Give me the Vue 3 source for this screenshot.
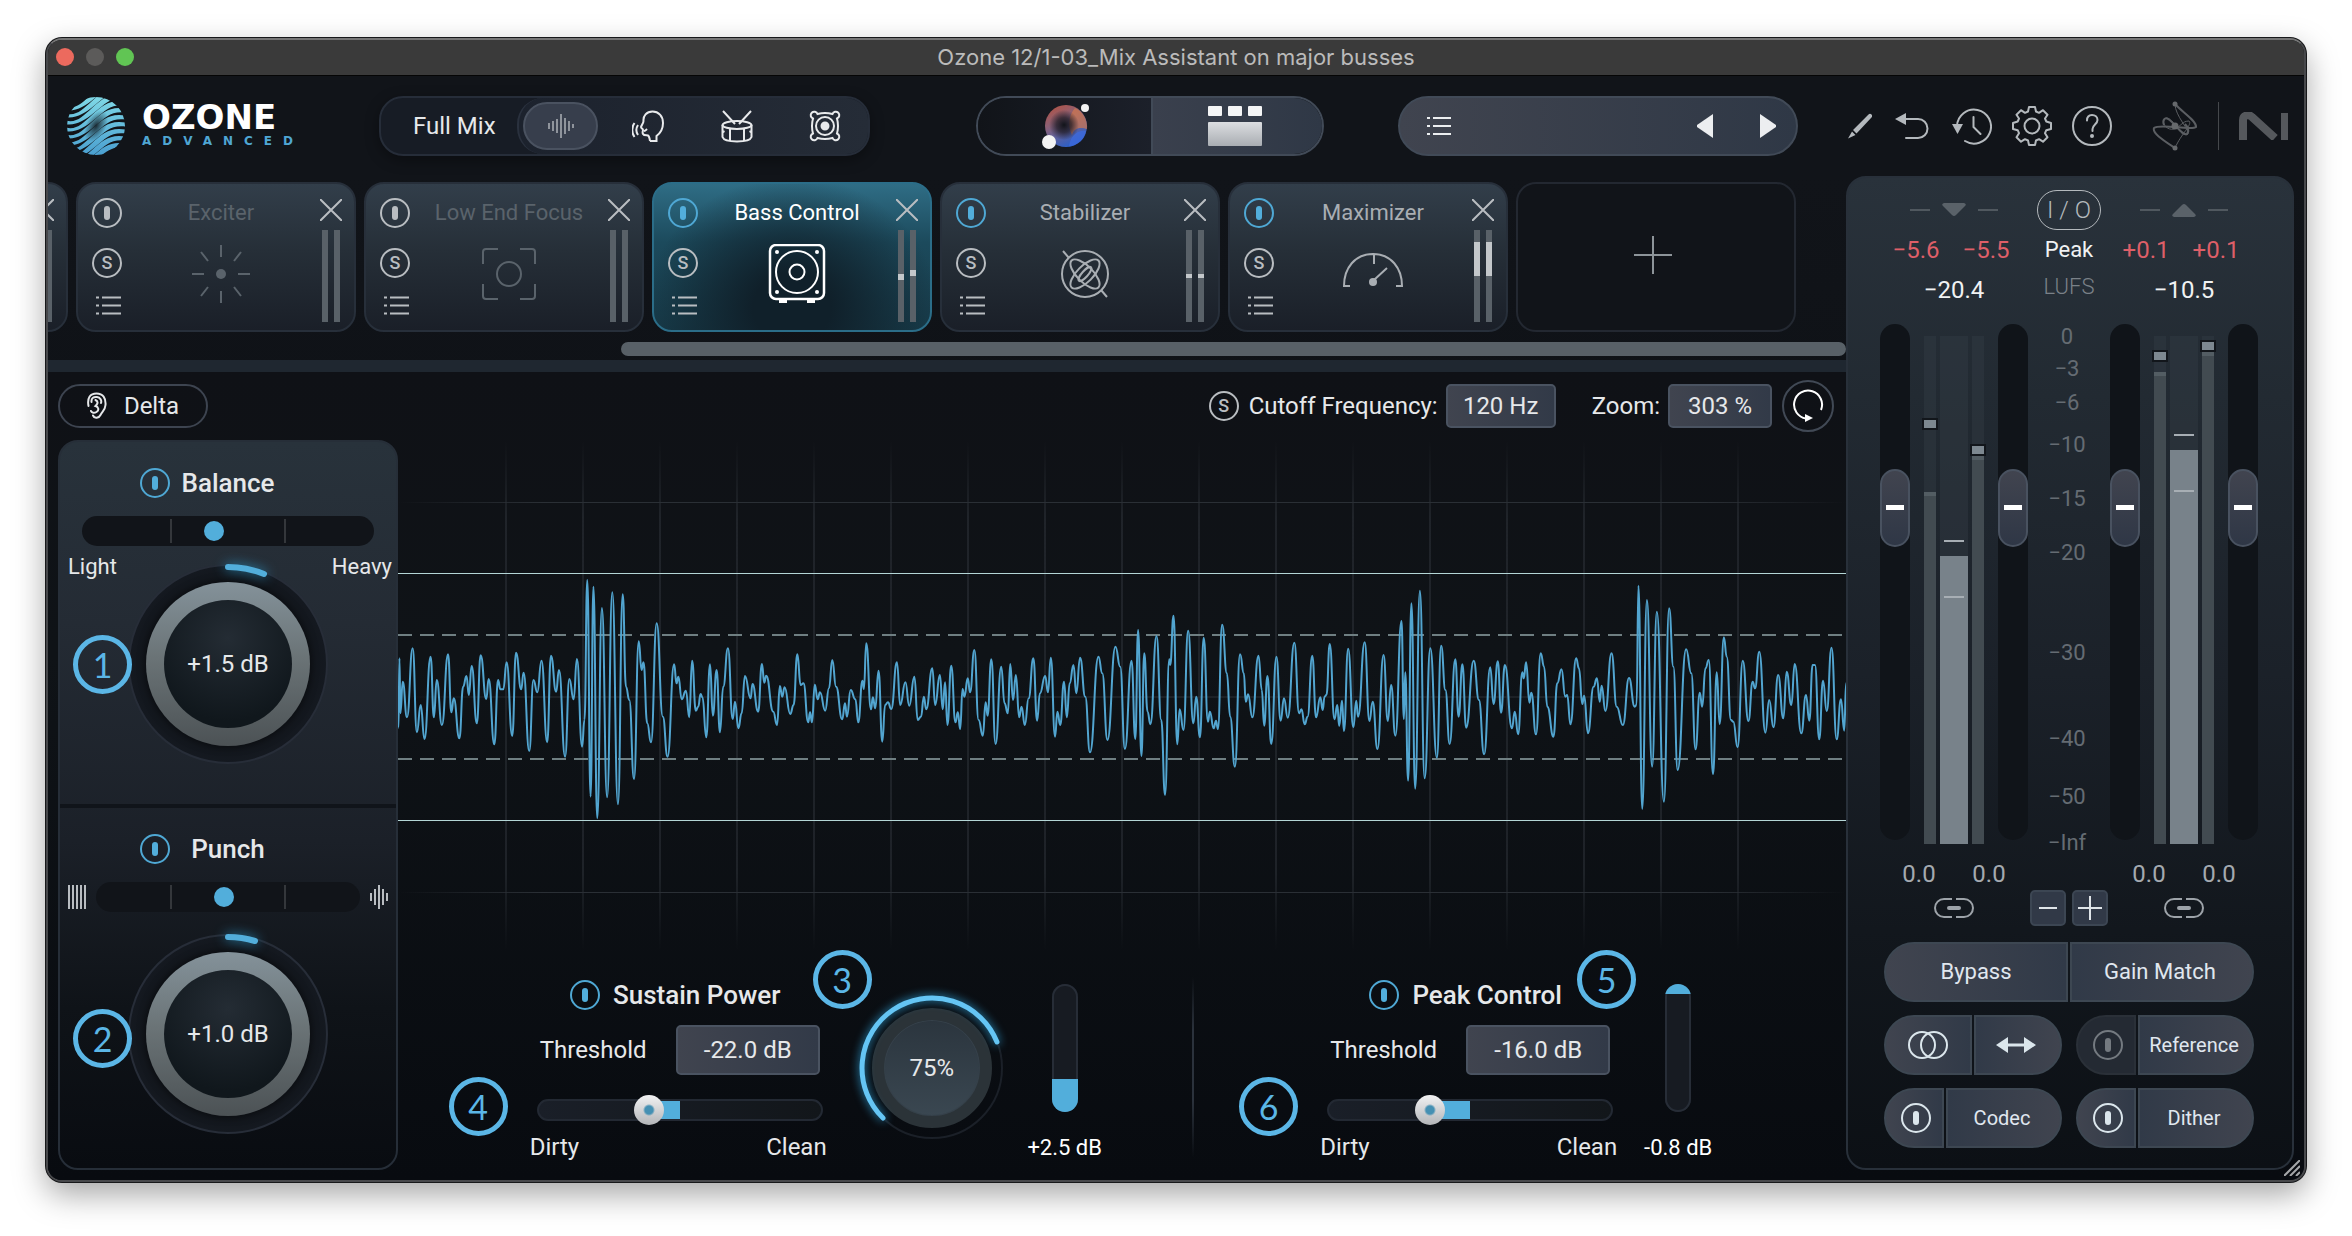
<script setup>
import { ref } from 'vue'

const modules = [
  { id: 'edge', name: '', state: 'off', meter: [] },
  { id: 'exciter', name: 'Exciter', state: 'off', meter: [] },
  { id: 'lowend', name: 'Low End Focus', state: 'off', meter: [] },
  { id: 'bass', name: 'Bass Control', state: 'active', meter: [[44, 6], [40, 6]] },
  { id: 'stabilizer', name: 'Stabilizer', state: 'on', meter: [[44, 4], [44, 4]] },
  { id: 'maximizer', name: 'Maximizer', state: 'on', meter: [[12, 34], [12, 34]] }
]

const macros = [
  { id: 'balance', name: 'Balance', value: '+1.5 dB', badge: 1, dot: 132, arc: 'M100 3A97 97 0 0 1 136 10' },
  { id: 'punch', name: 'Punch', value: '+1.0 dB', badge: 2, dot: 128, arc: 'M100 3A97 97 0 0 1 127 7' }
]

const groups = ref([
  { id: 'sustain', name: 'Sustain Power', badges: [3, 4], threshold: '-22.0 dB', slider: 38, knob: '75%', from: 74, fill: 27, readout: '+2.5 dB' },
  { id: 'peak', name: 'Peak Control', badges: [5, 6], threshold: '-16.0 dB', slider: 34, knob: '', from: 0, fill: 8, readout: '-0.8 dB' }
])

const cutoff = ref('120 Hz')
const zoom = ref('303 %')

const ticks = [
  ['0', 13], ['−3', 45], ['−6', 79], ['−10', 121], ['−15', 175],
  ['−20', 229], ['−30', 329], ['−40', 415], ['−50', 473], ['−Inf', 519]
]

const io = [
  { id: 'in', peaks: ['−5.6', '−5.5'], lufs: '−20.4', l: 156, lp: 82, r: 120, rp: 108, mid: 220, marks: [204, 260] },
  { id: 'out', peaks: ['+0.1', '+0.1'], lufs: '−10.5', l: 36, lp: 14, r: 16, rp: 4, mid: 114, marks: [98, 154] }
]
const faders = ref({ inL: 67, inR: 67, outL: 67, outR: 67 })

const gridLines = Array.from({ length: 17 }, (_, i) => 108 + i * 77)

// Turning points of the waveform, in the scope's own sample units.
const head = [[18, 565], [20, 355], [22, 520], [27, 425], [36, 532], [48, 325], [57, 577], [65, 495], [73, 597], [86, 350], [93, 532], [99, 420], [110, 555], [123, 343], [130, 517], [135, 475], [147, 595], [155, 440], [162, 408], [167, 465], [173, 378], [184, 550], [192, 346], [204, 477], [209, 417], [221, 613], [229, 420], [234, 448], [240, 448], [247, 367], [259, 588], [267, 338], [278, 448], [283, 398], [295, 633], [304, 420], [312, 457], [321, 362], [333, 607], [341, 347], [352, 455], [358, 390], [371, 650], [380, 417], [389, 478], [396, 357], [407, 620], [412, 540], [418, 120], [425, 770], [431, 140], [439, 835], [449, 204], [460, 772], [471, 157], [483, 793], [493, 163], [500, 440], [507, 480], [517, 717], [527, 304], [533, 390], [537, 367], [545, 550], [553, 607], [565, 250], [578, 530], [588, 650], [602, 373], [607, 430], [611, 410], [618, 478], [627, 452], [634, 532], [640, 362], [648, 512], [653, 500], [658, 462], [662, 472], [670, 592], [678, 373], [684, 527], [692, 390], [699, 577], [706, 440], [716, 325], [726, 537], [731, 485], [738, 565], [745, 520], [752, 408], [764, 475], [768, 432], [780, 515], [788, 372], [793, 428], [797, 407], [812, 515], [820, 555], [826, 438], [831, 470], [836, 442], [848, 522], [855, 495], [863, 343], [870, 435], [876, 430], [886, 547], [890, 517], [894, 547], [900, 434], [906, 478], [911, 457], [922, 512], [930, 445], [937, 360], [945, 440], [958, 538], [964, 490], [968, 530], [976, 450], [986, 478], [992, 547], [1001, 422], [1004, 447], [1009, 310], [1019, 508], [1023, 472], [1028, 505], [1035, 392], [1043, 605], [1049, 495], [1055, 487], [1062, 507], [1074, 367], [1081, 495], [1092, 427], [1100, 497], [1111, 410], [1118, 540], [1125, 530], [1131, 470], [1136, 508], [1149, 385], [1155, 495], [1165, 405], [1171, 508], [1176, 427], [1181, 555], [1189, 377], [1198, 547], [1203, 517], [1208, 567], [1213, 447], [1217, 470], [1224, 415], [1229, 457], [1238, 330], [1247, 540], [1256, 587], [1262, 487], [1266, 527], [1274, 358], [1283, 612], [1295, 380], [1302, 490], [1309, 520], [1314, 372], [1320, 480], [1326, 405], [1333, 532], [1338, 500], [1345, 555], [1353, 475], [1363, 355], [1371, 542], [1377, 460], [1388, 408], [1394, 457], [1400, 353], [1409, 590], [1414, 515], [1420, 555], [1428, 425], [1434, 532], [1440, 430], [1448, 375], [1454, 460], [1462, 353], [1473, 470], [1483, 637], [1501, 350], [1509, 400], [1520, 600], [1537, 320], [1547, 380]]
const tail = [[10, 627], [24, 362], [32, 597], [38, 270], [45, 648], [51, 340], [58, 515], [64, 553], [77, 288], [87, 540], [95, 765], [104, 358], [106, 375], [113, 227], [121, 613], [126, 508], [134, 570], [144, 272], [155, 550], [161, 470], [169, 592], [177, 293], [186, 545], [190, 515], [198, 565], [203, 542], [207, 567], [216, 254], [226, 400], [233, 530], [243, 680], [254, 343], [262, 400], [266, 485], [271, 463], [280, 532], [293, 347], [300, 450], [305, 557], [312, 408], [320, 612], [331, 350], [340, 542], [347, 475], [355, 533], [369, 308], [379, 520], [384, 508], [391, 553], [397, 530], [407, 347], [415, 532], [424, 472], [429, 510], [433, 470], [437, 465], [444, 312], [454, 538], [460, 495], [464, 558], [470, 482], [474, 573], [483, 326], [494, 562], [500, 482], [504, 530], [518, 307], [528, 543], [535, 485], [545, 627], [558, 345], [567, 543], [574, 435], [583, 587], [596, 243], [601, 537], [604, 397], [610, 722], [617, 190], [625, 746], [635, 152], [645, 715], [657, 325], [671, 653], [680, 317], [689, 450], [698, 612], [710, 358], [717, 530], [725, 373], [733, 563], [749, 362], [760, 480], [771, 643], [784, 382], [791, 492], [800, 364], [807, 518], [815, 375], [830, 565], [836, 515], [843, 583], [852, 397], [855, 415], [860, 367], [867, 488], [871, 458], [881, 583], [891, 340], [898, 380], [905, 500], [918, 590], [926, 430], [935, 388], [943, 470], [947, 465], [954, 553], [966, 355], [972, 385], [979, 492], [983, 467], [991, 580], [1003, 440], [1010, 415], [1016, 485], [1020, 437], [1028, 513], [1041, 340], [1052, 500], [1065, 555], [1078, 414], [1090, 500], [1094, 495], [1098, 137], [1106, 807], [1116, 180], [1127, 680], [1137, 215], [1152, 785], [1163, 205], [1172, 380], [1181, 690], [1199, 328], [1210, 400], [1219, 628], [1228, 458], [1233, 500], [1240, 385], [1247, 360], [1256, 703], [1264, 397], [1270, 552], [1279, 292], [1285, 350], [1294, 540], [1299, 545], [1308, 622], [1319, 362], [1331, 543], [1340, 425], [1345, 445], [1354, 335], [1367, 578], [1375, 480], [1384, 562], [1394, 405], [1405, 535], [1412, 395], [1422, 495], [1429, 372], [1443, 580], [1453, 465], [1460, 542], [1467, 375], [1472, 375], [1481, 598], [1489, 422], [1497, 513], [1507, 323], [1518, 598], [1527, 478], [1534, 572], [1538, 430]]
const samples = [...head, ...tail.map(([x, y]) => [x + 1547, y])]
const wave = samples.reduce((d, [x, y], i) => {
  if (!i) return `M${x} ${y}`
  const [px, py] = samples[i - 1]
  const mx = (px + x) / 2
  return `${d}C${mx} ${py} ${mx} ${y} ${x} ${y}`
}, '')

const logoLines = Array.from({ length: 11 }, (_, i) => 2 + i * 7)
</script>

<template>
  <div class="window">
    <header class="titlebar">
      <div class="lights">
        <button class="light red" aria-label="Close"></button>
        <button class="light grey" aria-label="Minimize"></button>
        <button class="light green" aria-label="Zoom window"></button>
      </div>
      <h1>Ozone 12/1-03_Mix Assistant on major busses</h1>
    </header>

    <nav class="topbar">
      <div class="brand">
        <svg width="60" height="58" viewBox="0 0 60 58" aria-hidden="true">
          <defs>
            <linearGradient id="globe" x1="0" y1="0" x2="0" y2="1">
              <stop offset="0" stop-color="#7fd8e6" />
              <stop offset="1" stop-color="#4a9fd0" />
            </linearGradient>
            <radialGradient id="swirl">
              <stop offset="0" stop-color="#101419" stop-opacity=".85" />
              <stop offset="1" stop-color="#101419" stop-opacity="0" />
            </radialGradient>
            <mask id="stripes" maskUnits="userSpaceOnUse" x="0" y="0" width="60" height="58">
              <g fill="#fff">
                <path v-for="y in logoLines" :key="y" :d="`M-2 ${y}c12 4 18-3 28-12s18-17 36-13v4c-16-3-22 4-33 13s-19 14-31 12z`" />
              </g>
            </mask>
          </defs>
          <circle cx="30" cy="29" r="29" fill="url(#globe)" mask="url(#stripes)" />
          <ellipse cx="30" cy="29" rx="10" ry="17" transform="rotate(30 30 29)" fill="url(#swirl)" />
        </svg>
        <div class="wordmark">
          <strong>OZONE</strong>
          <span>ADVANCED</span>
        </div>
      </div>

      <div class="focus">
        <span>Full Mix</span>
        <div class="modes">
          <button class="selected" aria-label="Full mix">
            <svg width="28" height="24" viewBox="0 0 28 24"><path d="M2 9v6M6 7v10M10 5v14M14 0v24M18 4v16M22 7v10M26 10v4" /></svg>
          </button>
          <button aria-label="Vocals">
            <svg width="34" height="32" viewBox="0 0 34 32"><path d="M18 31h6.500v-5c4-3 6.500-7 6.500-13C31 6 26.500 1.500 20.500 1.500S11 6 11.500 11c0 2-2 4-2.500 6 0 1.500 2 1.500 2 3s-1 2 0 4 4 1 5 1.500 1.500 2 2 5.500M6 15c-2 3-2 7 0 10M2.500 13c-3 4-3 10 0 14M15 19c-1 1-1.500 2-3 2" /></svg>
          </button>
          <button aria-label="Drums">
            <svg width="34" height="34" viewBox="0 0 34 34"><ellipse cx="17" cy="16" rx="14.500" ry="4" /><path d="M2.500 16v12c2 6 27 6 29 0V16M10 20v12M24 20v12M2.500 22l2 1M31.500 22l-2 1M15 15 3 2M19 15 31 2" /></svg>
          </button>
          <button aria-label="Bass">
            <svg width="32" height="32" viewBox="0 0 32 32"><path d="M8.500 4Q16 2 23.500 4A3.500 3.500 0 1 1 28 8.500Q30 16 28 23.500A3.500 3.500 0 1 1 23.500 28Q16 30 8.500 28A3.500 3.500 0 1 1 4 23.500Q2 16 4 8.500A3.500 3.500 0 1 1 8.500 4z" /><circle cx="16" cy="16" r="9" /><circle cx="16" cy="16" r="3.500" fill="#e8eaec" /></svg>
          </button>
        </div>
      </div>

      <div class="view">
        <button class="assistant" aria-label="Assistant view">
          <svg width="48" height="48" viewBox="0 0 48 48">
            <defs>
              <linearGradient id="orb" x1="0" y1="0" x2=".5" y2="1">
                <stop offset="0" stop-color="#b9503a" /><stop offset=".45" stop-color="#8a6178" /><stop offset="1" stop-color="#2f5fc4" />
              </linearGradient>
              <radialGradient id="core"><stop offset="0" stop-color="#12141a" /><stop offset=".5" stop-color="#1a1820" stop-opacity=".7" /><stop offset="1" stop-color="#1a1820" stop-opacity="0" /></radialGradient>
            </defs>
            <circle cx="25" cy="24" r="21" fill="url(#orb)" />
            <path d="M34 6a21 21 0 0 1 12 21c-5-2-13-2-15 6-5-10-3-20 3-27z" fill="#d87a4a" opacity=".65" />
            <path d="M45 29c-6-1-15 2-17 15 9 0 16-7 17-15z" fill="#3d6be0" opacity=".7" />
            <circle cx="23" cy="23" r="15" fill="url(#core)" />
            <circle cx="8" cy="40" r="7" fill="#f3f3f3" /><circle cx="44" cy="6" r="4" fill="#f3f3f3" />
          </svg>
        </button>
        <button class="detail" aria-label="Module view">
          <svg width="54" height="40" viewBox="0 0 54 40">
            <defs><linearGradient id="mod" x1="0" y1="0" x2="0" y2="1"><stop offset="0" stop-color="#dcdee1" /><stop offset="1" stop-color="#a9adb2" /></linearGradient></defs>
            <rect width="14" height="10" rx="1" fill="#f4f5f6" /><rect x="20" width="14" height="10" rx="1" fill="#f4f5f6" /><rect x="40" width="14" height="10" rx="1" fill="#f4f5f6" /><rect y="16" width="54" height="24" rx="1" fill="url(#mod)" />
          </svg>
        </button>
      </div>

      <div class="preset">
        <button aria-label="Presets"><svg width="24" height="20" viewBox="0 0 24 20"><path d="M0 2h3M6 2h18M0 10h3M6 10h18M0 18h3M6 18h18" stroke="#eceef0" stroke-width="2" /></svg></button>
        <div class="steps">
          <button aria-label="Previous preset"><svg width="17" height="24" viewBox="0 0 17 24"><path d="M16 0v24L0 13v-2z" fill="#eceef0" /></svg></button>
          <button aria-label="Next preset"><svg width="17" height="24" viewBox="0 0 17 24"><path d="M1 0v24l16-11v-2z" fill="#eceef0" /></svg></button>
        </div>
      </div>

      <div class="tools">
        <button aria-label="Edit"><svg width="24" height="26" viewBox="0 0 24 26"><path d="m5 17 15.500-15.500a2 2 0 0 1 3 3L8.500 20.500zM4 18.500 7.500 22 0 25.500z" fill="#b4b9bd" /></svg></button>
        <button class="wide" aria-label="Undo"><svg width="34" height="26" viewBox="0 0 34 26"><path d="M10 6h13a9.500 9.500 0 0 1 0 19H11" class="line" /><path d="M0 6 11 0v12z" fill="#b4b9bd" /></svg></button>
        <button aria-label="History"><svg width="40" height="40" viewBox="0 0 40 40"><path d="M5 20a17 17 0 1 1 8 15M21.500 11v10l7 7" class="line" /><path d="M0 18h11L5.500 28z" fill="#b4b9bd" /></svg></button>
        <button aria-label="Settings"><svg width="40" height="40" viewBox="0 0 40 40"><path class="line" d="M16 5.500 17 1h6l1 4.500 3 1.300L31 4.200l4.500 4.600L33 12.500l1.300 3L39 17v6l-4.700 1.200-1.300 3 2.500 4-4.500 4.500-4-2.500-3 1.300L23 39h-6l-1-4.500-3-1.300-4 2.500-4.500-4.500 2.500-4-1.300-3L1 23v-6l4.700-1.500 1.300-3-2.500-3.700L9 4.200l4 2.600z" /><circle class="line" cx="20" cy="20" r="7.500" /></svg></button>
        <button aria-label="Help"><svg width="40" height="40" viewBox="0 0 40 40"><circle class="line" cx="20" cy="20" r="19" /><path class="line" d="M15 14.500c0-3.500 2-5.500 5-5.500s5.500 2 5.500 5c0 4-5 5-5 9v2" /><circle cx="20" cy="30" r="2" fill="#b4b9bd" /></svg></button>
        <svg class="izotope" width="46" height="50" viewBox="0 0 46 50" aria-hidden="true"><g fill="none" stroke="#5b5e62" stroke-width="2"><path d="M23 3C30 11 45 20 44 26 40 30 8 22 2 27c-2 5 9 12 21 20" /><path d="M23 3c0 12 15 26 13 30-8 5-14-17-22-16-6 3 0 13 8 11 8-3 8-8 15-8 4 3-8 13-14 27" stroke-width="1" /><path d="M12 24c-2-5 1-8 4-6 7 4 14 17 19 15 3-3 0-8-2-10" /></g><g fill="#66696c"><circle cx="23" cy="25" r="3.500" /><circle cx="23" cy="3" r="2.500" /><circle cx="23" cy="47" r="2.500" /></g></svg>
        <i class="rule"></i>
        <svg width="50" height="28" viewBox="0 0 50 28" aria-hidden="true"><path d="M4 28V8c0-5 6-6 9-3l23 21" fill="none" stroke="#55585c" stroke-width="8" /><path d="M42 1h7v27h-7z" fill="#55585c" /></svg>
      </div>
    </nav>

    <div class="body">
      <div class="main">
        <div class="chain">
          <div class="cards">
            <article v-for="m in modules" :key="m.id" class="card" :class="m.state">
              <div v-if="m.name" class="side">
                <button class="power" :aria-label="`${m.name} power`"></button>
                <button class="solo" :aria-label="`${m.name} solo`">S</button>
                <button class="menu" :aria-label="`${m.name} presets`"><svg width="25" height="19" viewBox="0 0 25 19"><path d="M0 1.500h3M6 1.500h19M0 9.500h3M6 9.500h19M0 17.500h3M6 17.500h19" stroke="#b9bdc1" stroke-width="2" /></svg></button>
              </div>
              <div class="face">
                <h2 v-if="m.name">{{ m.name }}</h2>
                <svg v-if="m.id === 'exciter'" class="glyph" viewBox="0 0 60 60"><circle cx="30" cy="30" r="5" fill="currentColor" stroke="none" /><path d="M30 1v12M30 47v12M1 30h12M47 30h12M10 8l7 9M50 8l-7 9M10 52l7-9M50 52l-7-9" /></svg>
                <svg v-else-if="m.id === 'lowend'" class="glyph" viewBox="0 0 60 60"><circle cx="30" cy="30" r="12" /><path d="M4 20V8q0-3 3-3h12M41 5h12q3 0 3 3v12M56 40v12q0 3-3 3H41M19 55H7q-3 0-3-3V40" /></svg>
                <svg v-else-if="m.id === 'bass'" class="glyph" viewBox="0 0 60 60"><rect x="3" y="1" width="54" height="54" rx="6" stroke-width="2.500" /><circle cx="30" cy="28" r="21" /><circle cx="30" cy="28" r="7.500" /><g fill="currentColor" stroke="none"><circle cx="10" cy="8" r="2" /><circle cx="50" cy="8" r="2" /><circle cx="10" cy="48" r="2" /><circle cx="50" cy="48" r="2" /><path d="M12 56h8v3h-8zM40 56h8v3h-8z" /></g></svg>
                <svg v-else-if="m.id === 'stabilizer'" class="glyph" viewBox="0 0 60 60"><circle cx="30" cy="30" r="23" /><ellipse cx="30" cy="30" rx="8" ry="19" transform="rotate(45 30 30)" /><ellipse cx="30" cy="30" rx="8" ry="19" transform="rotate(-45 30 30)" /><ellipse cx="30" cy="30" rx="3" ry="9" transform="rotate(42 30 30)" /><path d="m14 14-6-7M46 46l6 7" /></svg>
                <svg v-else-if="m.id === 'maximizer'" class="glyph" viewBox="0 0 60 60"><path d="M7 42H1C1 24 12 10 30 10s29 14 29 32h-6M31 10v10M31 36l13-12" /><circle cx="30" cy="38" r="4" fill="currentColor" stroke="none" /></svg>
              </div>
              <div class="end">
                <button class="close" :aria-label="`Remove ${m.name}`"><svg width="22" height="22" viewBox="0 0 22 22"><path d="m0 0 22 22M22 0 0 22" stroke="#b9bdc1" stroke-width="2" /></svg></button>
                <div class="minis">
                  <i v-for="n in 2" :key="n"><b v-if="m.meter.length" :style="{ top: m.meter[n - 1][0] + 'px', height: m.meter[n - 1][1] + 'px' }"></b></i>
                </div>
              </div>
            </article>
            <button class="card add" aria-label="Add module"><svg width="38" height="38" viewBox="0 0 38 38"><path d="M19 0v38M0 19h38" stroke="#8d9499" stroke-width="2" /></svg></button>
          </div>
          <div class="scroller"><i></i></div>
        </div>

        <section class="stage">
          <div class="stagebar">
            <button class="delta">
              <svg width="20" height="28" viewBox="0 0 20 28"><path d="M1.500 14C0 6 3 1.500 9.500 1.500S19 6 18.500 13c-.5 6-3.500 6-5 10-1.500 3-6 4-7.500.5M4.500 10C4 6 7 4.500 10 5s5 3 4 6M8.500 8c4 2 1 5 0 6 3 1 4 4 1 6s-5 0-5.500-1" /></svg>
              Delta
            </button>
            <div class="params">
              <button class="solo" aria-label="Solo band">S</button>
              <label for="cutoff">Cutoff Frequency:</label>
              <input id="cutoff" v-model="cutoff" class="field" type="text">
              <label for="zoom" class="second">Zoom:</label>
              <input id="zoom" v-model="zoom" class="field narrow" type="text">
              <button class="reset" aria-label="Reset zoom"><svg width="32" height="34" viewBox="0 0 32 34"><path d="M29 21A14 14 0 1 0 14 29.500" fill="none" stroke="#fff" stroke-width="2" /><path d="M13 25v8l8-4z" fill="#fff" /></svg></button>
            </div>
          </div>

          <div class="work">
            <aside class="macros">
              <section v-for="m in macros" :key="m.id" class="macro" :class="m.id">
                <div class="heading">
                  <button class="power lit" :aria-label="`${m.name} power`"></button>
                  <h2>{{ m.name }}</h2>
                </div>
                <div class="meterline">
                  <svg v-if="m.id === 'punch'" width="18" height="24" viewBox="0 0 18 24"><path d="M1 0v24M5 0v24M9 0v24M13 0v24M17 0v24" stroke="#b9bdc1" stroke-width="2" /></svg>
                  <div class="groove"><i :style="{ left: m.dot + 'px' }"></i></div>
                  <svg v-if="m.id === 'punch'" width="18" height="24" viewBox="0 0 18 24"><path d="M1 8v8M5 4v16M9 0v24M13 4v16M17 8v8" stroke="#b9bdc1" stroke-width="2" /></svg>
                </div>
                <div v-if="m.id === 'balance'" class="ends"><span>Light</span><span>Heavy</span></div>
                <div class="knob">
                  <svg viewBox="0 0 200 200"><path :d="m.arc" /></svg>
                  <div class="cap"><output>{{ m.value }}</output></div>
                </div>
                <span class="badge">{{ m.badge }}</span>
              </section>
            </aside>

            <div class="scopecol">
              <svg class="scope" viewBox="0 0 1448 510" preserveAspectRatio="none" aria-label="Waveform">
                <defs>
                  <linearGradient id="fadeY" gradientUnits="userSpaceOnUse" x1="0" y1="0" x2="0" y2="510"><stop offset="0" stop-color="#30353c" stop-opacity="0" /><stop offset=".15" stop-color="#30353c" /><stop offset=".85" stop-color="#30353c" /><stop offset="1" stop-color="#30353c" stop-opacity="0" /></linearGradient>
                  <linearGradient id="fadeX" gradientUnits="userSpaceOnUse" x1="0" y1="0" x2="1448" y2="0"><stop offset="0" stop-color="#30353c" stop-opacity="0" /><stop offset=".1" stop-color="#2a2f35" /><stop offset=".9" stop-color="#2a2f35" /><stop offset="1" stop-color="#30353c" stop-opacity="0" /></linearGradient>
                </defs>
                <path v-for="x in gridLines" :key="x" :d="`M${x} 0V510`" stroke="url(#fadeY)" />
                <path d="M0 62.500H1448M0 257H1448M0 452.500H1448" stroke="url(#fadeX)" />
                <path d="M0 195H1448M0 319H1448" stroke="#6f7f82" stroke-width="2" stroke-dasharray="14 8" />
                <path d="M0 133.500H1448M0 380.500H1448" stroke="#b4d6d6" />
                <g transform="translate(-8 100) scale(.472 .3333)"><path :d="wave" class="wave" /></g>
              </svg>

              <div class="groups">
                <div v-for="g in groups" :key="g.id" class="group" :class="g.id">
                  <div class="inner">
                    <div class="controls">
                      <div class="heading"><button class="power lit" :aria-label="`${g.name} power`"></button><h2>{{ g.name }}</h2></div>
                      <div class="threshold">
                        <label :for="`${g.id}-threshold`">Threshold</label>
                        <input :id="`${g.id}-threshold`" v-model="g.threshold" class="field tall" type="text">
                      </div>
                      <input v-model="g.slider" class="blend" type="range" min="0" max="100" :aria-label="`${g.name} character`" :style="{ '--at': g.slider + '%' }">
                      <div class="ends"><span>Dirty</span><span>Clean</span></div>
                    </div>
                    <div v-if="g.knob" class="dial">
                      <svg viewBox="0 0 144 144"><circle cx="72" cy="72" r="70" stroke="#1b2028" stroke-width="2" /><path d="M23 122A70 70 0 1 1 137 46" stroke="#65c5f4" stroke-width="5" stroke-linecap="round" class="glow" /></svg>
                      <div class="disc"><output>{{ g.knob }}</output></div>
                    </div>
                    <div class="level">
                      <div class="tube"><i :style="{ top: g.from + '%', height: g.fill + '%' }"></i></div>
                      <output>{{ g.readout }}</output>
                    </div>
                    <span class="badge upper">{{ g.badges[0] }}</span>
                    <span class="badge lower">{{ g.badges[1] }}</span>
                  </div>
                </div>
              </div>
            </div>
          </div>
        </section>
      </div>

      <aside class="panel">
        <div class="trio heads">
          <div class="arrows"><i></i><svg width="24" height="14" viewBox="0 0 24 14"><path d="M2 0h20q3 1 1 3l-9 9q-2 2-4 0L1 3Q-1 1 2 0z" fill="#5a6269" /></svg><i></i></div>
          <button class="iobtn">I / O</button>
          <div class="arrows"><i></i><svg width="24" height="14" viewBox="0 0 24 14"><path d="M2 14h20q3-1 1-3l-9-9q-2-2-4 0l-9 9q-2 2 1 3z" fill="#5a6269" /></svg><i></i></div>
        </div>
        <div class="trio values">
          <div class="pair clip"><span v-for="(p, i) in io[0].peaks" :key="i">{{ p }}</span></div>
          <button class="unit on">Peak</button>
          <div class="pair clip"><span v-for="(p, i) in io[1].peaks" :key="i">{{ p }}</span></div>
          <span class="loud">{{ io[0].lufs }}</span>
          <button class="unit off">LUFS</button>
          <span class="loud">{{ io[1].lufs }}</span>
        </div>
        <div class="trio meters">
          <div class="channel">
            <input v-model="faders.inL" class="fader" type="range" aria-label="Input left">
            <div class="bars">
              <div class="thin"><i :style="{ top: io[0].l + 'px' }"></i><b :style="{ top: io[0].lp + 'px' }"></b></div>
              <div class="thick"><i :style="{ top: io[0].mid + 'px' }"></i><b v-for="k in io[0].marks" :key="k" :style="{ top: k + 'px' }"></b></div>
              <div class="thin"><i :style="{ top: io[0].r + 'px' }"></i><b :style="{ top: io[0].rp + 'px' }"></b></div>
            </div>
            <input v-model="faders.inR" class="fader" type="range" aria-label="Input right">
          </div>
          <div class="scale"><span v-for="t in ticks" :key="t[0]" :style="{ top: t[1] + 'px' }">{{ t[0] }}</span></div>
          <div class="channel">
            <input v-model="faders.outL" class="fader" type="range" aria-label="Output left">
            <div class="bars">
              <div class="thin"><i :style="{ top: io[1].l + 'px' }"></i><b :style="{ top: io[1].lp + 'px' }"></b></div>
              <div class="thick"><i :style="{ top: io[1].mid + 'px' }"></i><b v-for="k in io[1].marks" :key="k" :style="{ top: k + 'px' }"></b></div>
              <div class="thin"><i :style="{ top: io[1].r + 'px' }"></i><b :style="{ top: io[1].rp + 'px' }"></b></div>
            </div>
            <input v-model="faders.outR" class="fader" type="range" aria-label="Output right">
          </div>
        </div>
        <div class="trio gains">
          <div class="pair"><span>0.0</span><span>0.0</span></div>
          <span></span>
          <div class="pair"><span>0.0</span><span>0.0</span></div>
          <button class="link" aria-label="Link input"><svg width="40" height="20" viewBox="0 0 40 20"><path d="M18 1h-8a9 9 0 0 0 0 18h8M22 1h8a9 9 0 0 1 0 18h-8" /><rect x="13" y="8" width="14" height="4" rx="2" fill="#9da3a9" stroke="none" /></svg></button>
          <div class="zoomers">
            <button aria-label="Shrink scale"><svg width="24" height="24" viewBox="0 0 24 24"><path d="M3 12h18" stroke="#dfe4e8" stroke-width="2" /></svg></button>
            <button aria-label="Expand scale"><svg width="24" height="24" viewBox="0 0 24 24"><path d="M12 0v24M0 12h24" stroke="#dfe4e8" stroke-width="2" /></svg></button>
          </div>
          <button class="link" aria-label="Link output"><svg width="40" height="20" viewBox="0 0 40 20"><path d="M18 1h-8a9 9 0 0 0 0 18h8M22 1h8a9 9 0 0 1 0 18h-8" /><rect x="13" y="8" width="14" height="4" rx="2" fill="#9da3a9" stroke="none" /></svg></button>
        </div>
        <div class="switches">
          <div class="duo full"><button class="l">Bypass</button><button class="r">Gain Match</button></div>
          <div class="duo">
            <button class="l" aria-label="Mono"><svg width="40" height="28" viewBox="0 0 40 28"><g fill="none" stroke="#dbe6ec" stroke-width="2"><circle cx="14" cy="14" r="13" /><circle cx="26" cy="14" r="13" /></g></svg></button>
            <button class="r" aria-label="Swap channels"><svg width="40" height="16" viewBox="0 0 40 16"><path d="M10 8h20" stroke="#dbe6ec" stroke-width="3" /><path d="M0 8 12 0v16zM40 8 28 0v16z" fill="#dbe6ec" /></svg></button>
          </div>
          <div class="duo narrow dim"><button class="l" aria-label="Reference power"><i class="pw"></i></button><button class="r">Reference</button></div>
          <div class="duo narrow"><button class="l" aria-label="Codec power"><i class="pw"></i></button><button class="r">Codec</button></div>
          <div class="duo narrow"><button class="l" aria-label="Dither power"><i class="pw"></i></button><button class="r">Dither</button></div>
        </div>
      </aside>
      <svg class="grip" width="16" height="16" viewBox="0 0 16 16" aria-hidden="true"><path d="M0 16 16 0M6 16 16 6M12 16l4-4" stroke="#a5a7a9" stroke-width="2" /></svg>
    </div>
  </div>
</template>

<style>
body {
  margin: 0;
  background: #fff;
}
</style>

<style scoped>
* {
  box-sizing: border-box;
}

.window {
  margin: 38px 46px 54px;
  border: 2px solid #47484b;
  border-top-color: #757575;
  border-radius: 16px;
  overflow: hidden;
  box-shadow: 0 0 0 1px #17181a, 0 12px 32px rgba(0, 0, 0, 0.36);
  background: #111419;
  color: #e6e8ea;
  font-family: Roboto, "Liberation Sans", sans-serif;
  font-size: 24px;
  line-height: 28px;
}

button {
  display: flex;
  align-items: center;
  justify-content: center;
  padding: 0;
  border: 0;
  background: none;
  color: inherit;
  font: inherit;
}

h1, h2 {
  margin: 0;
  font-weight: 400;
}

input {
  margin: 0;
}

svg {
  display: block;
  flex: none;
}

/* title bar */
.titlebar {
  display: grid;
  grid-template-columns: 1fr auto 1fr;
  align-items: center;
  height: 36px;
  padding: 0 8px 2px;
  border-bottom: 1px solid #050505;
  background: #3a3a3a;
}

.lights {
  display: flex;
  gap: 12px;
}

.light {
  width: 18px;
  height: 18px;
  border-radius: 50%;
}

.red { background: #ec6a5e; }
.grey { background: #5c5b5a; }
.green { background: #61c554; }

.titlebar h1 {
  color: #bbb;
  font-family: Inter, sans-serif;
  font-size: 22px;
}

/* top bar */
.topbar {
  display: flex;
  align-items: center;
  height: 100px;
  padding: 0 15px 0 18px;
}

.brand {
  display: flex;
  align-items: center;
  gap: 16px;
  width: 313px;
}

.wordmark {
  display: flex;
  flex-direction: column;
  font-family: "DejaVu Sans", sans-serif;
}

.wordmark strong {
  color: #fff;
  font-size: 34px;
  line-height: 30px;
}

.wordmark span {
  color: #4fa6d3;
  font-size: 12px;
  font-weight: 700;
  letter-spacing: 11px;
  line-height: 18px;
}

.focus {
  display: flex;
  align-items: center;
  justify-content: space-between;
  height: 60px;
  padding-left: 32px;
  border: 2px solid #262d39;
  border-radius: 24px;
  background: #171c25;
  box-shadow: 0 4px 14px rgba(0, 0, 0, 0.35);
}

.focus > span {
  width: 104px;
}

.modes {
  display: flex;
  align-items: center;
  gap: 13px;
  height: 56px;
  padding: 0 6px 0 4px;
  border-left: 2px solid #2a313e;
  border-radius: 26px 22px 22px 26px;
  background: linear-gradient(90deg, #1c222d, #252c37);
}

.modes button {
  width: 75px;
  height: 48px;
  border: 2px solid transparent;
  border-radius: 24px;
}

.modes .selected {
  border-color: #4a5260;
  background: #373e4c;
}

.modes svg {
  fill: none;
  stroke: #e8eaec;
  stroke-width: 2;
}

.modes .selected svg {
  stroke-width: 1;
}

.view {
  display: flex;
  width: 348px;
  height: 60px;
  margin-left: 106px;
  border: 2px solid #414a57;
  border-radius: 30px;
  overflow: hidden;
}

.view .assistant {
  flex: 0 0 173px;
  background: linear-gradient(90deg, #111419, #1c202a);
}

.view .detail {
  flex: 1;
  padding-right: 6px;
  border-left: 2px solid #414a57;
  background: linear-gradient(90deg, #3a404d, #2f3846);
}

.preset {
  display: flex;
  align-items: center;
  justify-content: space-between;
  width: 400px;
  height: 60px;
  margin-left: 74px;
  padding: 0 20px 0 27px;
  border: 2px solid #414a57;
  border-radius: 30px;
  background: linear-gradient(90deg, #40444f, #2f3846);
}

.steps {
  display: flex;
  gap: 45px;
}

.tools {
  display: flex;
  align-items: center;
  gap: 20px;
  margin-left: auto;
}

.tools .line {
  fill: none;
  stroke: #b4b9bd;
  stroke-width: 2;
  stroke-linecap: round;
  stroke-linejoin: round;
}

.wide {
  width: 40px;
}

.izotope {
  margin-left: 20px;
}

.rule {
  width: 1px;
  height: 48px;
  background: #45484c;
}

/* body */
.body {
  position: relative;
  display: flex;
  padding: 0 10px 10px 0;
  background: linear-gradient(#111419, #080b10);
}

.main {
  display: flex;
  flex: 1;
  flex-direction: column;
  min-width: 0;
  margin-bottom: -10px;
}

.chain {
  padding-top: 6px;
  border-bottom: 12px solid #1f2730;
}

.cards {
  display: flex;
  justify-content: flex-end;
  gap: 8px;
  padding-right: 50px;
  overflow: hidden;
}

.card {
  display: flex;
  flex: none;
  justify-content: space-between;
  width: 280px;
  height: 150px;
  padding: 14px 12px 0 14px;
  border: 2px solid #272f3a;
  border-radius: 20px;
  background: linear-gradient(#323e4a, #262f38 45%, #1a1f28);
  color: #a9aeb3;
}

.card.active {
  border-color: #2b6d88;
  background: radial-gradient(ellipse at 50% 85%, #10202a 20%, transparent 75%), linear-gradient(#2f6d85, #1c4a5c 40%, #173a48);
  color: #fff;
}

.card.add {
  align-items: center;
  justify-content: center;
  padding: 0 6px 4px 0;
  border-color: #232831;
  background: #111419;
}

.side {
  display: flex;
  flex-direction: column;
  align-items: center;
  width: 30px;
}

.power, .solo {
  width: 30px;
  height: 30px;
  flex: none;
  border: 2px solid #b9bdc1;
  border-radius: 50%;
}

.power::before, .pw::before {
  content: "";
  width: 6px;
  height: 14px;
  border-radius: 3px;
  background: #b9bdc1;
}

.lit, .on .power, .active .power {
  border-color: #4fa8d4;
}

.lit::before, .on .power::before, .active .power::before {
  background: #52aedb;
}

.solo {
  color: #b9bdc1;
  font-size: 18px;
  font-weight: 500;
}

.side .solo {
  margin: 20px 0 18px;
}

.side .menu {
  margin-left: 2px;
}

.face {
  display: flex;
  flex-direction: column;
  align-items: center;
  flex: 1;
}

.face h2 {
  font-size: 22px;
  line-height: 30px;
  white-space: nowrap;
}

.off h2, .off .glyph {
  color: #5a636b;
}

.glyph {
  width: 60px;
  height: 60px;
  margin-top: 16px;
  fill: none;
  stroke: currentColor;
  stroke-width: 2;
}

.end {
  display: flex;
  flex-direction: column;
  align-items: center;
  width: 22px;
}

.close {
  margin: 1px 0 9px;
}

.minis {
  display: flex;
  gap: 6px;
}

.minis i {
  position: relative;
  width: 6px;
  height: 92px;
  background: #596168;
}

.minis b {
  position: absolute;
  left: 0;
  width: 6px;
  background: #c3c7ca;
}

.scroller {
  margin: 10px 0 4px;
}

.scroller i {
  display: block;
  width: calc(68% + 2px);
  height: 14px;
  margin-left: auto;
  border-radius: 7px;
  background: #586067;
}

/* stage */
.stage {
  flex: 1;
  padding-left: 10px;
  background: linear-gradient(#0f1116, #0f1317 35%, #080b10);
}

.stagebar {
  display: flex;
  align-items: center;
  justify-content: space-between;
  height: 68px;
  padding-right: 12px;
}

.delta {
  gap: 17px;
  width: 150px;
  height: 44px;
  border: 2px solid #3d4450;
  border-radius: 22px;
}

.delta svg {
  fill: none;
  stroke: #e6e8ea;
  stroke-width: 2;
  stroke-linecap: round;
}

.params {
  display: flex;
  align-items: center;
}

.params label {
  margin: 0 8px 0 10px;
}

.params .second {
  margin-left: 36px;
}

.field {
  width: 110px;
  height: 44px;
  padding: 0;
  border: 2px solid #4a5361;
  border-radius: 5px;
  background: linear-gradient(90deg, #40444f, #323a48);
  color: inherit;
  font: inherit;
  text-align: center;
}

.field.narrow {
  width: 104px;
}

.field.tall {
  width: 144px;
  height: 50px;
}

.reset {
  width: 52px;
  height: 52px;
  margin-left: 10px;
  border: 2px solid #414955;
  border-radius: 50%;
}

.work {
  display: flex;
}

.macros {
  display: flex;
  flex-direction: column;
  width: 340px;
  height: 730px;
  flex: none;
  margin-bottom: 10px;
  border: 2px solid #262e38;
  border-radius: 20px;
  background: linear-gradient(#28323b, #242b34 25%, #1b2028 55%, #0f1318 78%, #090c11);
}

.macro {
  position: relative;
  padding-top: 26px;
}

.balance {
  height: 366px;
  border-bottom: 4px solid #10141a;
}

.heading {
  display: flex;
  align-items: center;
  justify-content: center;
  gap: 13px;
  height: 30px;
  padding-right: 6px;
}

.heading h2 {
  font-size: 26px;
  font-weight: 500;
}

.macro .heading {
  display: grid;
  grid-template-columns: 30px 116px 30px;
  gap: 0;
  padding: 0;
}

.macro .heading h2 {
  text-align: center;
}

.meterline {
  display: flex;
  align-items: center;
  justify-content: space-between;
  margin: 18px 22px 0;
}

.punch .meterline {
  margin: 18px 8px 22px;
}

.groove {
  position: relative;
  flex: 1;
  height: 30px;
  border-radius: 15px;
  background: linear-gradient(#34373b, #34373b) 88px 50% / 2px 24px no-repeat, linear-gradient(#34373b, #34373b) 202px 50% / 2px 24px no-repeat, #111419;
}

.punch .groove {
  margin: 0 10px;
  background-position: 74px 50%, 188px 50%, 0 0;
}

.groove i {
  position: absolute;
  top: 5px;
  width: 20px;
  height: 20px;
  margin-left: -10px;
  border-radius: 50%;
  background: #52aedb;
}

.ends {
  display: flex;
  justify-content: space-between;
}

.macro .ends {
  height: 18px;
  padding: 0 4px 0 8px;
  font-size: 22px;
  line-height: 42px;
}

.knob {
  position: relative;
  display: grid;
  place-items: center;
  width: 200px;
  height: 200px;
  margin: 0 auto;
  border: 2px solid #272d38;
  border-radius: 50%;
  background: radial-gradient(circle, #12161c 60%, #1b212b 99%);
}

.knob svg {
  position: absolute;
  inset: -2px;
  overflow: visible;
  fill: none;
  stroke: #52aedb;
  stroke-width: 6;
  stroke-linecap: round;
  filter: drop-shadow(0 0 6px #2b86b0);
}

.cap {
  display: grid;
  place-items: center;
  width: 164px;
  height: 164px;
  border: 18px solid transparent;
  border-radius: 50%;
  background: radial-gradient(circle at 50% 30%, #242c34, #10171c 75%) padding-box, linear-gradient(#84929a, #6b7477 45%, #4c5255) border-box;
  box-shadow: 0 0 8px rgba(0, 0, 0, 0.6);
}

.badge {
  position: absolute;
  display: grid;
  place-items: center;
  width: 59px;
  height: 59px;
  border: 5px solid #5bb6e6;
  border-radius: 50%;
  color: #5bb6e6;
  font-family: Lato, sans-serif;
  font-size: 34px;
  line-height: 46px;
}

.macro .badge {
  top: 193px;
  left: 13px;
}

.punch .badge {
  top: 201px;
}

.scopecol {
  flex: 1;
  min-width: 0;
}

.scope {
  width: 100%;
  height: 510px;
}

.wave {
  fill: none;
  stroke: #52a5d0;
  stroke-width: 2;
  vector-effect: non-scaling-stroke;
}

/* lower controls */
.groups {
  display: flex;
  height: 230px;
}

.group {
  display: flex;
  justify-content: center;
  flex: 1;
  padding-right: 4px;
}

.sustain {
  flex: 0 0 55%;
  padding: 0 0 0 42px;
  border-right: 2px solid;
  border-image: linear-gradient(transparent 12%, #2b323c 35%, #2b323c 65%, transparent 90%) 1;
}

.inner {
  position: relative;
  display: flex;
  align-items: flex-start;
}

.controls {
  width: 297px;
  padding-top: 30px;
}

.threshold {
  display: flex;
  align-items: center;
  justify-content: space-between;
  margin: 15px 7px 20px 10px;
}

.blend {
  display: block;
  width: 286px;
  height: 30px;
  margin: 0 5px 8px 7px;
  appearance: none;
  background: none;
}

.blend::-webkit-slider-runnable-track {
  height: 22px;
  border: 2px solid #232933;
  border-radius: 11px;
  background: linear-gradient(90deg, transparent var(--at), #52aedb var(--at), #52aedb 50%, transparent 50%), linear-gradient(90deg, #1a1f28, #12161a);
}

.blend::-webkit-slider-thumb {
  width: 30px;
  height: 30px;
  margin-top: -6px;
  appearance: none;
  border-radius: 50%;
  background: radial-gradient(circle, #4590b3 4px, transparent 6px), linear-gradient(#f2f2f3, #b3b5b8);
}

.dial {
  position: relative;
  display: grid;
  place-items: center;
  width: 144px;
  height: 144px;
  margin: 46px 0 0 33px;
}

.dial svg {
  position: absolute;
  inset: 0;
  overflow: visible;
  fill: none;
}

.glow {
  filter: drop-shadow(0 0 5px #2d9bd0);
}

.disc {
  display: grid;
  place-items: center;
  width: 120px;
  height: 120px;
  border: 12px solid #2b3338;
  border-radius: 50%;
  background: linear-gradient(#2b353e, #3a4751);
  box-shadow: inset 0 0 0 1px #36414a;
}

.level {
  display: flex;
  flex-direction: column;
  align-items: center;
  gap: 24px;
  width: 76px;
  margin: 34px 0 0 23px;
  color: #fff;
  font-size: 22px;
  line-height: 24px;
  white-space: nowrap;
}

.tube {
  position: relative;
  width: 26px;
  height: 128px;
  border-radius: 13px;
  overflow: hidden;
  background: #171b22;
  box-shadow: inset 0 0 0 2px #272d37;
}

.tube i {
  position: absolute;
  left: 0;
  width: 100%;
  background: #52aedb;
}

.upper {
  top: 0;
  left: 283px;
}

.lower {
  top: 127px;
  left: -81px;
}

.peak .upper {
  left: 257px;
}

/* input and output panel */
.panel {
  display: flex;
  flex-direction: column;
  width: 448px;
  flex: none;
  padding: 12px 33px 20px 31px;
  border: 2px solid #28303a;
  border-radius: 20px;
  background: linear-gradient(#29323b, #222a32 22%, #1b2129 50%, #12171d 76%, #0c1015);
}

.trio {
  display: grid;
  grid-template-columns: 148px 82px 148px;
  justify-content: center;
  align-items: center;
  justify-items: center;
}

.arrows {
  display: flex;
  align-items: center;
  gap: 12px;
}

.arrows i {
  width: 20px;
  height: 2px;
  background: #50585f;
}

.iobtn {
  width: 64px;
  height: 40px;
  border: 1px solid #b4b9bd;
  border-radius: 20px;
  color: #b4b9bd;
  font-weight: 300;
}

.values {
  grid-auto-rows: 40px;
}

.pair {
  display: grid;
  grid-template-columns: 70px 70px;
  text-align: center;
}

.clip {
  padding-right: 6px;
  color: #de5f68;
}

.unit {
  font-size: 22px;
}

.unit.off {
  padding-bottom: 6px;
  color: #7a8188;
  font-weight: 300;
}

.unit.on, .loud {
  color: #f0f2f3;
}

.meters {
  align-items: start;
  height: 520px;
  margin-top: 14px;
}

.channel {
  display: flex;
  justify-content: space-between;
  width: 148px;
}

.bars {
  display: flex;
  gap: 4px;
  height: 508px;
  margin-top: 12px;
}

.thin, .thick {
  position: relative;
  width: 12px;
  background: rgba(52, 60, 68, 0.45);
}

.thick {
  width: 28px;
}

.thin i, .thick i {
  position: absolute;
  right: 0;
  bottom: 0;
  left: 0;
  background: #424b51;
  border-top: 4px solid #535d63;
}

.thick i {
  border: 0;
  background: #78828a;
}

.thin b {
  position: absolute;
  left: -2px;
  width: 16px;
  height: 12px;
  border: 2px solid #12161b;
  background: #7d8890;
}

.thick b {
  position: absolute;
  left: 4px;
  width: 20px;
  height: 2px;
  background: #a7aeb4;
}

.fader {
  width: 30px;
  height: 516px;
  appearance: none;
  border-radius: 15px;
  background: #101419;
  writing-mode: vertical-lr;
  direction: rtl;
}

.fader::-webkit-slider-thumb {
  width: 30px;
  height: 78px;
  appearance: none;
  border: 2px solid #495260;
  border-radius: 15px;
  background: linear-gradient(#fff, #fff) 50% 50% / 18px 5px no-repeat, linear-gradient(#41444f, #2f3746);
}

.scale {
  position: relative;
  width: 100%;
  height: 520px;
  color: #656c73;
  font-size: 22px;
}

.scale span {
  position: absolute;
  width: 78px;
  margin-top: -14px;
  text-align: center;
}

.gains {
  grid-template-rows: 32px 36px;
  margin-top: 14px;
  color: #a4aab0;
}

.link svg {
  fill: none;
  stroke: #9da3a9;
  stroke-width: 2;
}

.zoomers {
  display: flex;
  gap: 6px;
}

.zoomers button {
  width: 36px;
  height: 36px;
  border: 2px solid #3c4653;
  border-radius: 5px;
  background: #313947;
}

.switches {
  display: grid;
  grid-template-columns: 1fr 1fr;
  gap: 13px 14px;
  margin: 16px 5px 0;
  color: #e0e7ef;
  font-size: 20px;
}

.duo {
  display: grid;
  grid-template-columns: 1fr 1fr;
  gap: 2px;
  height: 60px;
}

.duo.narrow {
  grid-template-columns: 60px 1fr;
}

.full {
  grid-column: span 2;
  font-size: 22px;
}

.duo button {
  border: 2px solid #3d4752;
  background: linear-gradient(90deg, #40444f, #313a48);
}

.duo .l {
  border-radius: 30px 0 0 30px;
}

.duo .r {
  padding-right: 4px;
  border-radius: 0 30px 30px 0;
  background: linear-gradient(90deg, #313a48, #40444f);
}

.pw {
  display: grid;
  place-items: center;
  width: 30px;
  height: 30px;
  margin-left: 4px;
  border: 2px solid #dbe6ec;
  border-radius: 50%;
}

.pw::before {
  background: #dbe6ec;
}

.dim .l {
  border-color: #2a3038;
  background: #242a33;
}

.dim .pw {
  border-color: #747a80;
}

.dim .pw::before {
  background: #747a80;
}

.grip {
  position: absolute;
  right: 4px;
  bottom: 4px;
}
</style>
